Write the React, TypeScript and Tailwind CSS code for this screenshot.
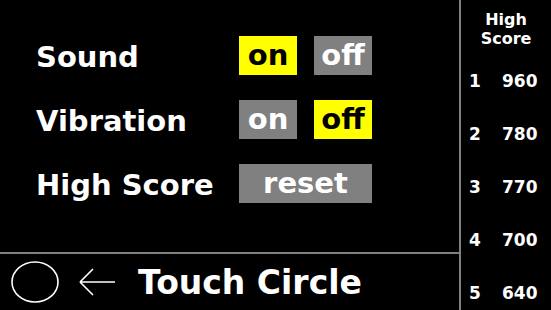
import React from 'react';

const font = { fontFamily: '"DejaVu Sans", "Liberation Sans", sans-serif' };

const scores = [
  { rank: 1, value: 960 },
  { rank: 2, value: 780 },
  { rank: 3, value: 770 },
  { rank: 4, value: 700 },
  { rank: 5, value: 640 },
];

const Toggle = ({ label, active }: { label: string; active: boolean }) => (
  <div
    className={`flex h-[39px] w-[58px] items-center justify-center text-[29px] font-bold leading-none ${
      active ? 'bg-[#ffff00] text-black' : 'bg-[#808080] text-white'
    }`}
  >
    {label}
  </div>
);

const SettingRow = ({ label, children }: { label: string; children: React.ReactNode }) => (
  <div className="flex h-[39px] items-center">
    <div className="w-[203px] pt-[3px] text-[29px] font-bold leading-none text-white">{label}</div>
    <div className="flex gap-[17px]">{children}</div>
  </div>
);

export default function App() {
  return (
    <div className="flex h-[310px] w-[551px] overflow-hidden bg-black text-white" style={font}>
      <div className="flex w-[459px] flex-col">
        <div className="flex flex-1 flex-col gap-[25px] pl-[36px] pt-[36px]">
          <SettingRow label="Sound">
            <Toggle label="on" active />
            <Toggle label="off" active={false} />
          </SettingRow>
          <SettingRow label="Vibration">
            <Toggle label="on" active={false} />
            <Toggle label="off" active />
          </SettingRow>
          <SettingRow label="High Score">
            <div className="flex h-[39px] w-[133px] items-center justify-center bg-[#808080] text-[29px] font-bold leading-none text-white">
              reset
            </div>
          </SettingRow>
        </div>
        <div className="flex h-[58px] items-center border-t-2 border-[#808080] pl-[11px]">
          <svg width="48" height="42" viewBox="0 0 48 42" className="shrink-0">
            <ellipse cx="24" cy="21" rx="23" ry="20" fill="none" stroke="white" strokeWidth="1.6" />
          </svg>
          <svg width="38" height="32" viewBox="0 0 38 32" className="ml-[19px] shrink-0">
            <path d="M2 16 H37 M2 16 L15 3 M2 16 L15 29" fill="none" stroke="white" strokeWidth="1.6" />
          </svg>
          <div className="ml-[22px] text-[33px] font-bold leading-none">Touch Circle</div>
        </div>
      </div>
      <div className="flex flex-1 flex-col border-l-2 border-[#808080]">
        <div className="flex flex-col items-center pt-[10px] text-[16px] font-bold leading-[19px]">
          <span>High</span>
          <span>Score</span>
        </div>
        <div className="mt-[23px] flex flex-col gap-[33px]">
          {scores.map((s) => (
            <div key={s.rank} className="flex text-[17px] font-bold leading-[20px]">
              <span className="w-[41px] pl-[8px]">{s.rank}</span>
              <span>{s.value}</span>
            </div>
          ))}
        </div>
      </div>
    </div>
  );
}
